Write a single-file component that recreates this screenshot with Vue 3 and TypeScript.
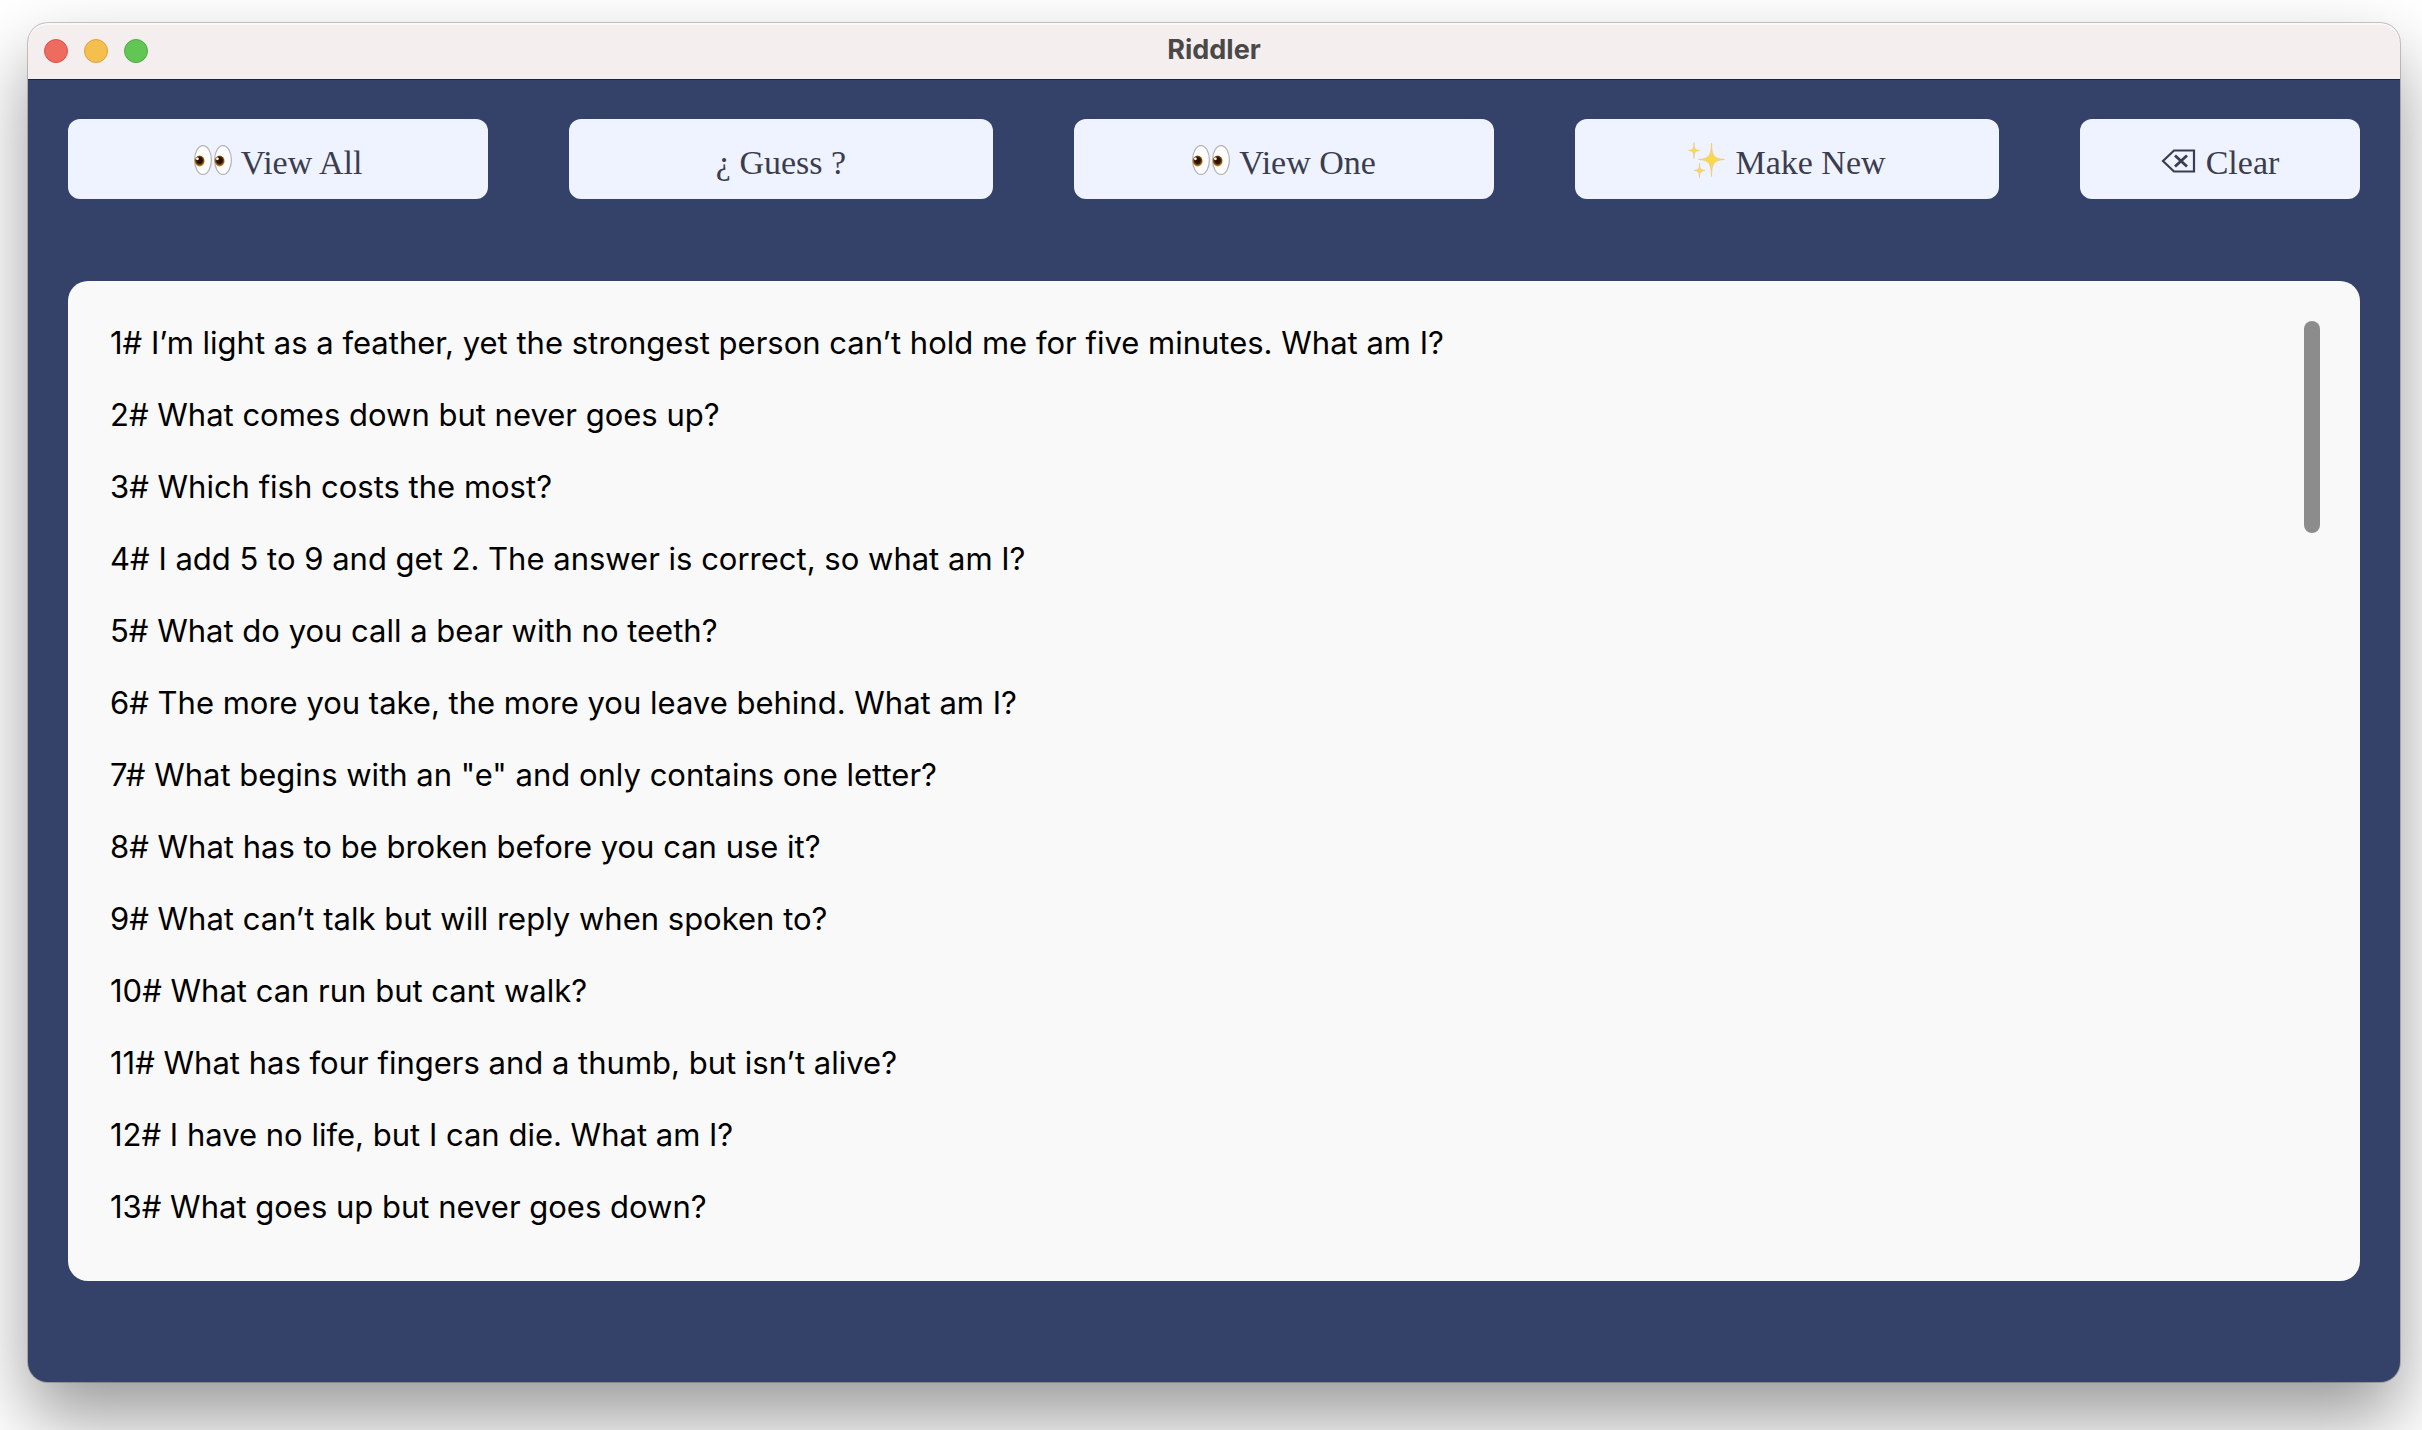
<script setup lang="ts">
import { computed, ref } from 'vue'

type IconName = 'eyes' | 'sparkles' | 'erase' | null

interface Action {
  label: string
  icon: IconName
}

const actions: Action[] = [
  { label: 'View All', icon: 'eyes' },
  { label: '¿ Guess ?', icon: null },
  { label: 'View One', icon: 'eyes' },
  { label: 'Make New', icon: 'sparkles' },
  { label: 'Clear', icon: 'erase' },
]

const riddles = ref<string[]>([
  'I’m light as a feather, yet the strongest person can’t hold me for five minutes. What am I?',
  'What comes down but never goes up?',
  'Which fish costs the most?',
  'I add 5 to 9 and get 2. The answer is correct, so what am I?',
  'What do you call a bear with no teeth?',
  'The more you take, the more you leave behind. What am I?',
  'What begins with an "e" and only contains one letter?',
  'What has to be broken before you can use it?',
  'What can’t talk but will reply when spoken to?',
  'What can run but cant walk?',
  'What has four fingers and a thumb, but isn’t alive?',
  'I have no life, but I can die. What am I?',
  'What goes up but never goes down?',
])

const visibleShare = ref(23)
const thumbStyle = computed(() => ({ height: `${visibleShare.value}%` }))
</script>

<template>
  <div class="desktop">
    <div class="window">
      <header class="titlebar">
        <div class="lights">
          <button type="button" class="light close" aria-label="Close"></button>
          <button type="button" class="light minimise" aria-label="Minimise"></button>
          <button type="button" class="light zoom" aria-label="Zoom"></button>
        </div>
        <h1 class="title">Riddler</h1>
      </header>

      <main class="content">
        <nav class="actions">
          <button v-for="action in actions" :key="action.label" type="button" class="action">
            <svg v-if="action.icon === 'eyes'" class="icon" viewBox="0 0 38 36" width="38" height="36" aria-hidden="true">
              <defs>
                <radialGradient id="iris" cx="50%" cy="45%" r="50%">
                  <stop offset="55%" stop-color="#2b1204" />
                  <stop offset="75%" stop-color="#6d3f0b" />
                  <stop offset="100%" stop-color="#b9862a" />
                </radialGradient>
              </defs>
              <g v-for="x in [0, 20]" :key="x" :transform="`translate(${x} 0)`">
                <ellipse cx="9" cy="18" rx="8.4" ry="14.4" fill="#fff" stroke="#b3b1b3" stroke-width="1.2" />
                <ellipse cx="5.6" cy="19" rx="5" ry="5.4" fill="url(#iris)" />
                <circle cx="3.4" cy="16.8" r="1.4" fill="#fff" />
              </g>
            </svg>
            <svg v-else-if="action.icon === 'sparkles'" class="icon" viewBox="0 0 38 36" width="38" height="36" aria-hidden="true">
              <g fill="#f8d84c" stroke="#f4bf78" stroke-width="0.6" stroke-linejoin="round">
                <path d="M23.500 1C24 13 25 16.500 36.500 17.500C25 18.500 24 22 23.500 34.500C23 22 22 18.500 10.500 17.500C22 16.500 23 13 23.500 1Z" />
                <path d="M6 0.500C6.300 6.500 6.600 8 11.500 8.500C6.600 9 6.300 10.500 6 16.500C5.700 10.500 5.400 9 0.500 8.500C5.400 8 5.700 6.500 6 0.500Z" />
                <path d="M11.500 21C11.800 26.500 12.100 28 17 28.500C12.100 29 11.800 30.500 11.500 36C11.200 30.500 10.900 29 6 28.500C10.900 28 11.200 26.500 11.500 21Z" />
              </g>
            </svg>
            <svg v-else-if="action.icon === 'erase'" class="icon" viewBox="0 0 36 36" width="36" height="36" aria-hidden="true">
              <g fill="none" stroke="#3b3d4f" stroke-width="2.200">
                <path d="M13 8.500H33V29.500H13L2 19Z" />
                <path d="M14 13.500L26 24.500M26 13.500L14 24.500" stroke-width="2.800" />
              </g>
            </svg>
            <span class="label">{{ action.label }}</span>
          </button>
        </nav>

        <section class="panel">
          <ol class="riddles">
            <li v-for="(riddle, index) in riddles" :key="index" class="riddle">{{ index + 1 }}# {{ riddle }}</li>
          </ol>
          <div class="track">
            <div class="thumb" :style="thumbStyle"></div>
          </div>
        </section>
      </main>
    </div>
  </div>
</template>

<style>
body {
  margin: 0;
  background: #fff;
}
</style>

<style scoped>
.desktop {
  box-sizing: border-box;
  display: flex;
  min-height: 100vh;
  padding: 23px 22px 48px 28px;
  overflow: hidden;
}

.window {
  flex: 1;
  display: flex;
  flex-direction: column;
  border-radius: 20px;
  background: #34426a;
  box-shadow:
    0 0 0 1px rgba(0, 0, 0, 0.2),
    0 36px 72px rgba(0, 0, 0, 0.4);
}

.titlebar {
  box-sizing: border-box;
  display: grid;
  grid-template-columns: 1fr auto 1fr;
  align-items: center;
  height: 56px;
  padding: 0 16px;
  border-radius: 20px 20px 0 0;
  background: #f4eeee;
  box-shadow: inset 0 2px 0 #faf7f7;
}

.lights {
  display: flex;
  gap: 16px;
}

.light {
  box-sizing: border-box;
  width: 24px;
  height: 24px;
  padding: 0;
  border: 1px solid;
  border-radius: 50%;
}

.close {
  border-color: #d8544a;
  background: #ed6b5f;
}

.minimise {
  border-color: #dba33c;
  background: #f5bf50;
}

.zoom {
  border-color: #4fab3f;
  background: #62c655;
}

.title {
  margin: 0;
  padding-bottom: 2px;
  color: #4b4848;
  font: 700 27px/32px Inter, "Liberation Sans", sans-serif;
}

.content {
  flex: 1;
  display: flex;
  flex-direction: column;
  gap: 82px;
  padding: 39px 40px 101px;
  border-top: 1px solid #18224a;
}

.actions {
  display: grid;
  grid-template-columns: 105fr 106fr 105fr 106fr 70fr;
  gap: 81px;
}

.action {
  display: flex;
  align-items: center;
  justify-content: center;
  gap: 9px;
  height: 80px;
  padding: 2px 0 0;
  border: 0;
  border-radius: 12px;
  background: #eef3ff;
  color: #3b3d4f;
  font: 400 34px/40px "Liberation Serif", serif;
  white-space: nowrap;
}

.icon {
  flex: none;
}

.label {
  padding-top: 6px;
}

.panel {
  flex: 1;
  display: flex;
  padding: 40px;
  border-radius: 20px;
  background: #f9f9f9;
}

.riddles {
  flex: 1;
  display: flex;
  flex-direction: column;
  gap: 32px;
  margin: 0;
  padding: 2px 0 0 2px;
  list-style: none;
  color: #000;
  font: 400 31px/40px Inter, "Liberation Sans", sans-serif;
}

.track {
  width: 16px;
}

.thumb {
  border-radius: 8px;
  background: #8c8c8c;
}
</style>
